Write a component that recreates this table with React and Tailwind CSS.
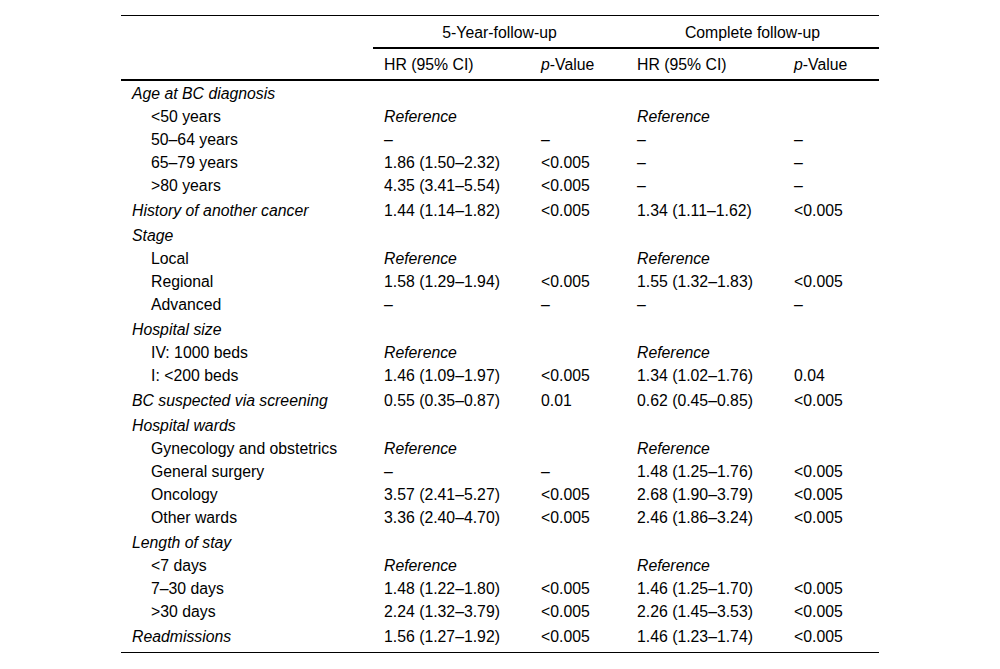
import React from "react";

const rows = [
  { label: "Age at BC diagnosis", group: true, first: true },
  { label: "<50 years", a: "Reference", c: "Reference" },
  { label: "50–64 years", a: "–", b: "–", c: "–", d: "–" },
  { label: "65–79 years", a: "1.86 (1.50–2.32)", b: "<0.005", c: "–", d: "–" },
  { label: ">80 years", a: "4.35 (3.41–5.54)", b: "<0.005", c: "–", d: "–" },
  { label: "History of another cancer", group: true, a: "1.44 (1.14–1.82)", b: "<0.005", c: "1.34 (1.11–1.62)", d: "<0.005" },
  { label: "Stage", group: true },
  { label: "Local", a: "Reference", c: "Reference" },
  { label: "Regional", a: "1.58 (1.29–1.94)", b: "<0.005", c: "1.55 (1.32–1.83)", d: "<0.005" },
  { label: "Advanced", a: "–", b: "–", c: "–", d: "–" },
  { label: "Hospital size", group: true },
  { label: "IV: 1000 beds", a: "Reference", c: "Reference" },
  { label: "I: <200 beds", a: "1.46 (1.09–1.97)", b: "<0.005", c: "1.34 (1.02–1.76)", d: "0.04" },
  { label: "BC suspected via screening", group: true, a: "0.55 (0.35–0.87)", b: "0.01", c: "0.62 (0.45–0.85)", d: "<0.005" },
  { label: "Hospital wards", group: true },
  { label: "Gynecology and obstetrics", a: "Reference", c: "Reference" },
  { label: "General surgery", a: "–", b: "–", c: "1.48 (1.25–1.76)", d: "<0.005" },
  { label: "Oncology", a: "3.57 (2.41–5.27)", b: "<0.005", c: "2.68 (1.90–3.79)", d: "<0.005" },
  { label: "Other wards", a: "3.36 (2.40–4.70)", b: "<0.005", c: "2.46 (1.86–3.24)", d: "<0.005" },
  { label: "Length of stay", group: true },
  { label: "<7 days", a: "Reference", c: "Reference" },
  { label: "7–30 days", a: "1.48 (1.22–1.80)", b: "<0.005", c: "1.46 (1.25–1.70)", d: "<0.005" },
  { label: ">30 days", a: "2.24 (1.32–3.79)", b: "<0.005", c: "2.26 (1.45–3.53)", d: "<0.005" },
  { label: "Readmissions", group: true, a: "1.56 (1.27–1.92)", b: "<0.005", c: "1.46 (1.23–1.74)", d: "<0.005" },
];

function Val({ v }) {
  if (!v) return <div className="pl-[11px]" />;
  return (
    <div className={"pl-[11px] whitespace-nowrap " + (v === "Reference" ? "italic" : "")}>{v}</div>
  );
}

export default function App() {
  return (
    <div className="w-[1000px] h-[669px] bg-white text-black pt-[15px] font-['Liberation_Sans',Arial,sans-serif] text-[15.8px] leading-[23px]">
      <div className="mx-auto w-[758px] border-t border-b border-black pb-[4px]">
        {/* header row 1 */}
        <div className="flex h-[33px]">
          <div className="w-[252px]" />
          <div className="flex-1 grid grid-cols-2 border-b-2 border-black items-center pt-[2px]">
            <div className="text-center">5-Year-follow-up</div>
            <div className="text-center">Complete follow-up</div>
          </div>
        </div>
        {/* header row 2 */}
        <div className="grid grid-cols-[252px_157px_96px_157px_96px] h-[32px] items-center border-b-2 border-black">
          <div />
          <div className="pl-[11px]">HR (95% CI)</div>
          <div className="pl-[11px]"><span className="italic">p</span>-Value</div>
          <div className="pl-[11px]">HR (95% CI)</div>
          <div className="pl-[11px]"><span className="italic">p</span>-Value</div>
        </div>
        <div className="pt-[1px]">
          {rows.map((r, i) => (
            <div
              key={i}
              className={
                "grid grid-cols-[252px_157px_96px_157px_96px] " +
                (r.group && !r.first ? "pt-[2px]" : "")
              }
            >
              <div className={r.group ? "pl-[11px] italic whitespace-nowrap" : "pl-[30px] whitespace-nowrap"}>
                {r.label}
              </div>
              <Val v={r.a} />
              <Val v={r.b} />
              <Val v={r.c} />
              <Val v={r.d} />
            </div>
          ))}
        </div>
      </div>
    </div>
  );
}
